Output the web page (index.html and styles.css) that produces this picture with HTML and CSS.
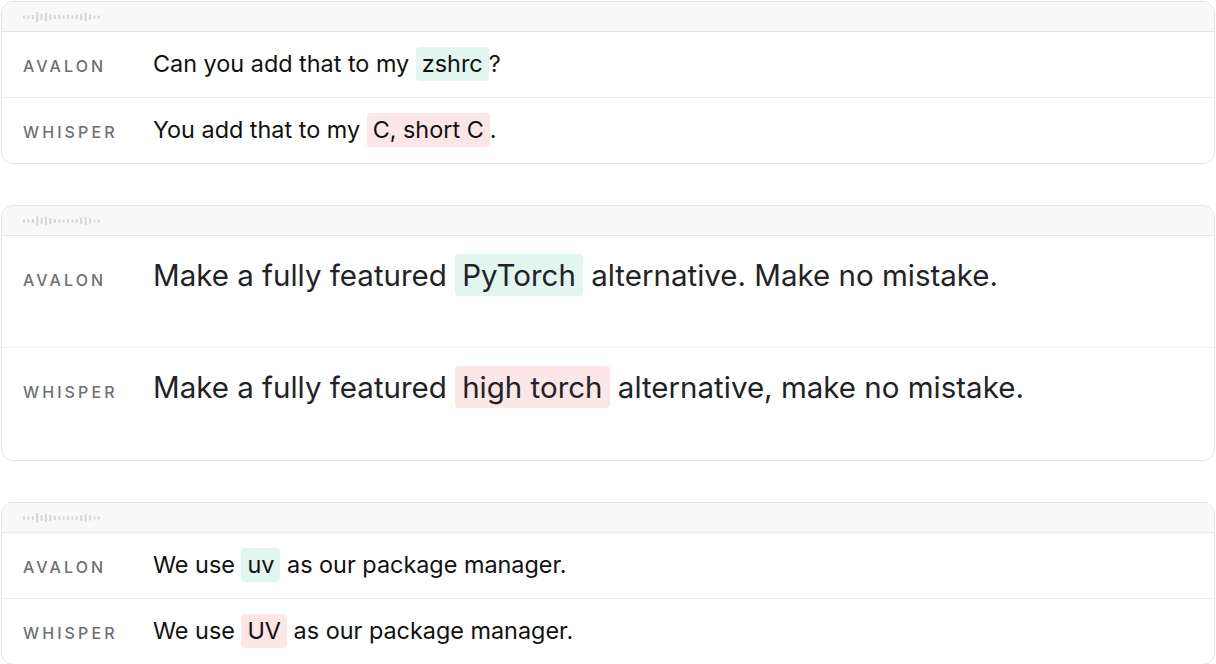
FILE: index.html
```html
<!DOCTYPE html>
<html lang="en">
<head>
    <meta charset="UTF-8">
    <title>Transcripts</title>
    <link rel="stylesheet" href="styles.css">
</head>
<body>
  <div class="cards">

    <div class="card">
      <div class="card-head">
        <svg class="wave" width="80" height="10" viewBox="0 0 80 10">
          <rect x="0" y="3.5" width="2" height="3"/>
          <rect x="4.4" y="3.5" width="2" height="3"/>
          <rect x="8.8" y="3" width="2" height="4"/>
          <rect x="13.2" y="0" width="2" height="10"/>
          <rect x="17.6" y="2" width="2" height="6"/>
          <rect x="22" y="1" width="2" height="8"/>
          <rect x="26.4" y="2" width="2" height="6"/>
          <rect x="30.8" y="3" width="2" height="4"/>
          <rect x="35.2" y="3" width="2" height="4"/>
          <rect x="39.6" y="3.5" width="2" height="3"/>
          <rect x="44" y="3" width="2" height="4"/>
          <rect x="48.4" y="3.5" width="2" height="3"/>
          <rect x="52.8" y="3" width="2" height="4"/>
          <rect x="57.2" y="2" width="2" height="6"/>
          <rect x="61.6" y="1" width="2" height="8"/>
          <rect x="66" y="2.5" width="2" height="5"/>
          <rect x="70.4" y="3.5" width="2" height="3"/>
          <rect x="74.8" y="3.5" width="2" height="3"/>
        </svg>
      </div>
      <div class="row">
        <span class="who">Avalon</span>
        <p class="line">Can you add that to my <span class="chip good">zshrc</span>?</p>
      </div>
      <div class="row">
        <span class="who">Whisper</span>
        <p class="line">You add that to my <span class="chip bad">C, short C</span>.</p>
      </div>
    </div>

    <div class="card big">
      <div class="card-head">
        <svg class="wave" width="80" height="10" viewBox="0 0 80 10">
          <rect x="0" y="3.5" width="2" height="3"/>
          <rect x="4.4" y="3.5" width="2" height="3"/>
          <rect x="8.8" y="3" width="2" height="4"/>
          <rect x="13.2" y="0" width="2" height="10"/>
          <rect x="17.6" y="2" width="2" height="6"/>
          <rect x="22" y="1" width="2" height="8"/>
          <rect x="26.4" y="2" width="2" height="6"/>
          <rect x="30.8" y="3" width="2" height="4"/>
          <rect x="35.2" y="3" width="2" height="4"/>
          <rect x="39.6" y="3.5" width="2" height="3"/>
          <rect x="44" y="3" width="2" height="4"/>
          <rect x="48.4" y="3.5" width="2" height="3"/>
          <rect x="52.8" y="3" width="2" height="4"/>
          <rect x="57.2" y="2" width="2" height="6"/>
          <rect x="61.6" y="1" width="2" height="8"/>
          <rect x="66" y="2.5" width="2" height="5"/>
          <rect x="70.4" y="3.5" width="2" height="3"/>
          <rect x="74.8" y="3.5" width="2" height="3"/>
        </svg>
      </div>
      <div class="row">
        <span class="who">Avalon</span>
        <p class="line">Make a fully featured <span class="chip good">PyTorch</span> alternative. Make no mistake.</p>
      </div>
      <div class="row">
        <span class="who">Whisper</span>
        <p class="line">Make a fully featured <span class="chip bad">high torch</span> alternative, make no mistake.</p>
      </div>
    </div>

    <div class="card">
      <div class="card-head">
        <svg class="wave" width="80" height="10" viewBox="0 0 80 10">
          <rect x="0" y="3.5" width="2" height="3"/>
          <rect x="4.4" y="3.5" width="2" height="3"/>
          <rect x="8.8" y="3" width="2" height="4"/>
          <rect x="13.2" y="0" width="2" height="10"/>
          <rect x="17.6" y="2" width="2" height="6"/>
          <rect x="22" y="1" width="2" height="8"/>
          <rect x="26.4" y="2" width="2" height="6"/>
          <rect x="30.8" y="3" width="2" height="4"/>
          <rect x="35.2" y="3" width="2" height="4"/>
          <rect x="39.6" y="3.5" width="2" height="3"/>
          <rect x="44" y="3" width="2" height="4"/>
          <rect x="48.4" y="3.5" width="2" height="3"/>
          <rect x="52.8" y="3" width="2" height="4"/>
          <rect x="57.2" y="2" width="2" height="6"/>
          <rect x="61.6" y="1" width="2" height="8"/>
          <rect x="66" y="2.5" width="2" height="5"/>
          <rect x="70.4" y="3.5" width="2" height="3"/>
          <rect x="74.8" y="3.5" width="2" height="3"/>
        </svg>
      </div>
      <div class="row">
        <span class="who">Avalon</span>
        <p class="line">We use <span class="chip good">uv</span> as our package manager.</p>
      </div>
      <div class="row">
        <span class="who">Whisper</span>
        <p class="line">We use <span class="chip bad">UV</span> as our package manager.</p>
      </div>
    </div>

  </div>
</body>
</html>
```

FILE: styles.css
```css
*{
  margin:0;
  padding:0;
  box-sizing:border-box;
}
body{
  background:#fff;
  font-family:Inter, "Liberation Sans", sans-serif;
  color:#111;
}
.cards{
  display:flex;
  flex-direction:column;
  gap:41px;
  padding:1px 1px 0 1px;
}
.card{
  border:1px solid #e3e3e3;
  border-radius:12px;
  overflow:hidden;
  background:#fff;
}
.card-head{
  height:30px;
  background:#f8f8f8;
  border-bottom:1px solid #e6e6e6;
  display:flex;
  align-items:center;
  padding-left:21px;
}
.wave{
  fill:#d6d6d6;
}
.row{
  display:flex;
  align-items:baseline;
  padding:15px 21px 16px 21px;
  border-bottom:1px solid #efefef;
}
.row:last-child{
  border-bottom:none;
}
.who{
  width:130px;
  flex:none;
  font-size:16px;
  font-weight:500;
  letter-spacing:3.1px;
  text-transform:uppercase;
  color:#6f6f75;
}
.line{
  font-size:23.4px;
  line-height:34px;
}
.chip{
  display:inline-block;
  padding:0 6px;
  border-radius:4px;
}
.good{
  background:#e2f5ee;
}
.bad{
  background:#fce6e6;
}
.big .row{
  padding:18px 21px 51px 21px;
}
.big .row:last-child{
  padding-bottom:52px;
}
.big .line{
  font-size:29.5px;
  line-height:42px;
  color:#1f2328;
}
.big .chip{
  padding:0 7px;
}
```
